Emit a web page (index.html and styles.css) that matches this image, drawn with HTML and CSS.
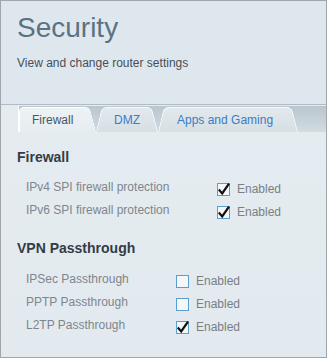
FILE: index.html
```html
<!DOCTYPE html>
<html>
<head>
<meta charset="utf-8">
<link rel="stylesheet" href="styles.css">
</head>
<body>
<div class="page">
  <header class="header">
    <h1 class="title">Security</h1>
    <p class="subtitle">View and change router settings</p>
  </header>
  <nav class="tabbar">
    <div class="strip">
      <div class="tab tab-active">Firewall</div>
      <div class="tab tab-dmz">DMZ</div>
      <div class="tab tab-apps">Apps and Gaming</div>
    </div>
  </nav>
  <main class="content">
    <h2 class="heading">Firewall</h2>
    <div class="rows">
      <div class="row">
        <span class="label label-wide">IPv4 SPI firewall protection</span>
        <svg class="cb" viewBox="0 0 13 13" width="13" height="13"><rect x="0.5" y="0.5" width="12" height="12" fill="#f3f7fa" stroke="#5a9fcb"/><path d="M1.8 6.6 L5.2 10.4 L12 0.6" fill="none" stroke="#111" stroke-width="2.2" stroke-linejoin="miter"/></svg>
        <span class="opt">Enabled</span>
      </div>
      <div class="row">
        <span class="label label-wide">IPv6 SPI firewall protection</span>
        <svg class="cb" viewBox="0 0 13 13" width="13" height="13"><rect x="0.5" y="0.5" width="12" height="12" fill="#f3f7fa" stroke="#5a9fcb"/><path d="M1.8 6.6 L5.2 10.4 L12 0.6" fill="none" stroke="#111" stroke-width="2.2" stroke-linejoin="miter"/></svg>
        <span class="opt">Enabled</span>
      </div>
    </div>
    <h2 class="heading heading-vpn">VPN Passthrough</h2>
    <div class="rows rows-vpn">
      <div class="row">
        <span class="label label-narrow">IPSec Passthrough</span>
        <svg class="cb" viewBox="0 0 13 13" width="13" height="13"><rect x="0.5" y="0.5" width="12" height="12" fill="#f3f7fa" stroke="#5a9fcb"/></svg>
        <span class="opt">Enabled</span>
      </div>
      <div class="row">
        <span class="label label-narrow">PPTP Passthrough</span>
        <svg class="cb" viewBox="0 0 13 13" width="13" height="13"><rect x="0.5" y="0.5" width="12" height="12" fill="#f3f7fa" stroke="#5a9fcb"/></svg>
        <span class="opt">Enabled</span>
      </div>
      <div class="row">
        <span class="label label-narrow">L2TP Passthrough</span>
        <svg class="cb" viewBox="0 0 13 13" width="13" height="13"><rect x="0.5" y="0.5" width="12" height="12" fill="#f3f7fa" stroke="#5a9fcb"/><path d="M1.8 6.6 L5.2 10.4 L12 0.6" fill="none" stroke="#111" stroke-width="2.2" stroke-linejoin="miter"/></svg>
        <span class="opt">Enabled</span>
      </div>
    </div>
  </main>
</div>
</body>
</html>
```
FILE: styles.css
```css
* { box-sizing: border-box; }
html, body { margin: 0; padding: 0; }
body {
  font-family: "Liberation Sans", Arial, sans-serif;
  background: #e5ecf0;
}
.page {
  width: 327px;
  height: 358px;
  border: 1px solid #a2a6a9;
  background: linear-gradient(#e6edf1, #e2eaef);
  overflow: hidden;
}
.header {
  height: 104px;
  background: #dee7ee;
  border-bottom: 1px solid #b2bbc1;
  padding: 11px 16px 0;
}
.title {
  margin: 0;
  font-size: 28px;
  line-height: 32px;
  font-weight: normal;
  color: #5a7282;
}
.subtitle {
  margin: 11px 0 0;
  font-size: 12px;
  line-height: 16px;
  color: #474f55;
}
.tabbar {
  padding: 1px 0 0 17px;
}
.strip {
  height: 26px;
  border-left: 1px solid #ffffff;
  background: linear-gradient(#b8c6ce, #d2dce1);
  display: flex;
  align-items: flex-end;
}
.tab {
  position: relative;
  z-index: 1;
  height: 25px;
  display: flex;
  align-items: center;
  font-size: 12px;
  line-height: 16px;
  color: #3b7cc5;
  padding-top: 1px;
}
.tab::before,
.tab::after {
  content: "";
  position: absolute;
  top: 0;
  bottom: 0;
  z-index: -1;
  background: linear-gradient(#e3e9ed, #d5dfe4);
  border-top: 1px solid rgba(255,255,255,0.85);
}
.tab::before {
  left: 0;
  width: 60%;
  transform-origin: bottom left;
  transform: skewX(-13deg);
  border-left: 1px solid rgba(255,255,255,0.85);
  border-top-left-radius: 5px;
}
.tab::after {
  right: 0;
  width: 60%;
  transform-origin: bottom right;
  transform: skewX(14deg);
  border-right: 1px solid rgba(255,255,255,0.85);
  border-top-right-radius: 5px;
}
.tab-active {
  z-index: 2;
  width: 77px;
  padding-left: 13px;
  color: #4a5662;
}
.tab-active::before,
.tab-active::after {
  background: linear-gradient(#edf2f4, #e6edf1);
  border-color: #ffffff;
}
.tab-active::before {
  transform: none;
}
.tab-dmz {
  width: 62px;
  padding-left: 18px;
}
.tab-apps {
  width: 140px;
  padding-left: 19px;
}
.content {
  padding: 17px 16px 0;
}
.heading {
  margin: 0;
  font-size: 14px;
  line-height: 16px;
  font-weight: bold;
  color: #333c44;
}
.heading-vpn {
  margin-top: 15px;
}
.rows {
  margin-top: 14px;
}
.rows-vpn {
  margin-top: 15px;
}
.row {
  display: flex;
  align-items: flex-start;
  height: 23px;
  padding-left: 9px;
  font-size: 12px;
  line-height: 16px;
}
.label {
  color: #7e868c;
}
.label-wide { width: 191px; }
.label-narrow { width: 150px; }
.cb {
  display: block;
  flex: none;
  margin-top: 4px;
  overflow: visible;
}
.opt {
  margin-left: 7px;
  padding-top: 2px;
  color: #797f84;
}
```
